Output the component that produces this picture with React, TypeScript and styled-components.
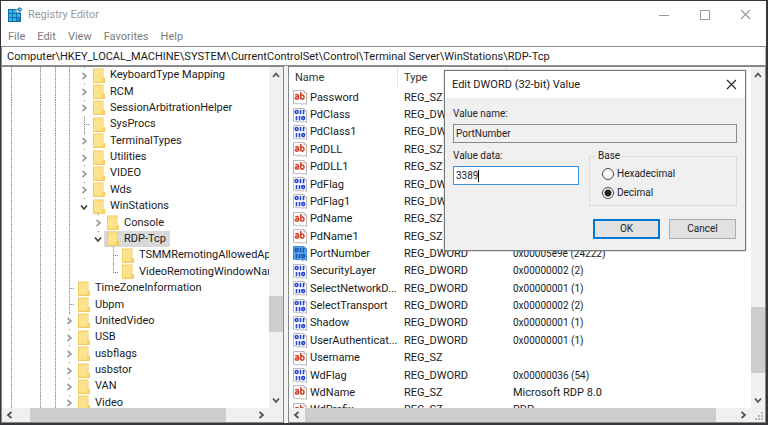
import React from "react";
import styled, { createGlobalStyle, css } from "styled-components";

const UI_FONT = '"Roboto", "Open Sans", sans-serif';

const GlobalStyle = createGlobalStyle`
  * { box-sizing: border-box; }
  html, body, #root { height: 100%; }
  body {
    margin: 0;
    overflow: hidden;
    font-family: ${UI_FONT};
    font-size: 11px;
    line-height: 16px;
    color: #1b1b1b;
  }
  button, input { font: inherit; color: inherit; }
`;

/* ---------- window frame ---------- */

const Window = styled.main`
  position: relative;
  height: 100%;
  display: flex;
  flex-direction: column;
  background: #fff;
  border: solid #37373b;
  border-width: 1px 2px 2px 1px;
`;

const TitleBar = styled.header`
  flex: none;
  height: 27px;
  display: flex;
  align-items: center;
  padding-left: 7px;
`;

const WindowTitle = styled.h1`
  flex: 1;
  margin: 0 0 0 5px;
  font-size: 11px;
  line-height: 16px;
  font-weight: 400;
  color: #9a9a9a;
`;

const CaptionButton = styled.button<{ $dark?: boolean }>`
  flex: none;
  width: 41px;
  height: 26px;
  padding: 0;
  border: 0;
  background: none;
  display: grid;
  place-items: center;
  color: ${(p) => (p.$dark ? "#222" : "#999")};
`;

const MenuBar = styled.nav`
  flex: none;
  height: 18px;
  display: flex;
  gap: 12px;
  padding-left: 7px;
`;

const MenuItem = styled.button`
  padding: 0;
  border: 0;
  background: none;
  line-height: 16px;
  color: #7b7b7b;
`;

const AddressBar = styled.input`
  flex: none;
  width: 100%;
  height: 20px;
  padding: 0 5px;
  border: 1px solid #8c8c8c;
  border-right-color: #b5b5b5;
  background: #fff;
  outline: 0;
`;

const Panes = styled.div`
  flex: 1;
  min-height: 0;
  display: flex;
  gap: 4px;
  background: #f3f3f3;
`;

const Pane = styled.section<{ $basis?: number }>`
  ${(p) => (p.$basis ? css`flex: none; width: ${p.$basis}px;` : css`flex: 1; min-width: 0;`)}
  display: grid;
  grid-template-columns: minmax(0, 1fr) 14px;
  grid-template-rows: minmax(0, 1fr) 14px;
  background: #fff;
  border: 1px solid #83878d;
`;

/* ---------- scroll bars ---------- */

const Track = styled.div<{ $vertical?: boolean }>`
  display: flex;
  flex-direction: ${(p) => (p.$vertical ? "column" : "row")};
  background: #f0f0f0;
`;

const Arrow = styled.button<{ $vertical?: boolean }>`
  flex: none;
  width: ${(p) => (p.$vertical ? "14px" : "16px")};
  height: ${(p) => (p.$vertical ? "16px" : "14px")};
  padding: 0;
  border: 0;
  background: none;
  display: grid;
  place-items: center;
  color: #505050;
`;

const Space = styled.div<{ $grow: number }>`
  flex: ${(p) => p.$grow} 1 0;
`;

const Thumb = styled.div<{ $grow: number }>`
  flex: ${(p) => p.$grow} 1 0;
  background: #cdcdcd;
`;

const Corner = styled.div`
  background: #f0f0f0;
  display: grid;
  place-items: end;
`;

const turns = { up: "M1 6 4 2.5 7 6", down: "M1 2.5 4 6 7 2.5", left: "M5.5 1 2 4 5.5 7", right: "M2.5 1 6 4 2.5 7" };

function Chevron({ to }: { to: keyof typeof turns }) {
  return (
    <svg width="8" height="8" viewBox="0 0 8 8" fill="none" stroke="currentColor" strokeWidth="1.7">
      <path d={turns[to]} />
    </svg>
  );
}

function ScrollBar({ vertical, parts }: { vertical?: boolean; parts: [number, number, number] }) {
  return (
    <Track $vertical={vertical}>
      <Arrow $vertical={vertical} aria-label={vertical ? "Scroll up" : "Scroll left"}>
        <Chevron to={vertical ? "up" : "left"} />
      </Arrow>
      <Space $grow={parts[0]} />
      <Thumb $grow={parts[1]} />
      <Space $grow={parts[2]} />
      <Arrow $vertical={vertical} aria-label={vertical ? "Scroll down" : "Scroll right"}>
        <Chevron to={vertical ? "down" : "right"} />
      </Arrow>
    </Track>
  );
}

/* ---------- key tree ---------- */

const dots = "repeating-linear-gradient(to bottom, #8e8e8e 0 1px, #e4e4e4 1px 2px)";

const TreeViewport = styled.div`
  overflow: hidden;
  display: grid;
`;

const TreeList = styled.ul`
  margin: 0 0 -3px;
  padding: 0 0 0 9px;
  list-style: none;
  display: grid;
  grid-auto-rows: minmax(0, 1fr);
`;

const TreeRow = styled.li`
  display: flex;
  align-items: stretch;
  white-space: nowrap;
`;

const Guide = styled.span<{ $w: number }>`
  flex: none;
  width: ${(p) => p.$w}px;
  background: ${dots} left / 1px 100% no-repeat;
`;

const Branch = styled.span<{ $last?: boolean }>`
  flex: none;
  width: 13px;
  background:
    repeating-linear-gradient(to right, #8e8e8e 0 1px, #e4e4e4 1px 2px) 7px 8px / 5px 1px no-repeat,
    ${dots} 7px 0 / 1px ${(p) => (p.$last ? "9px" : "100%")} no-repeat;
`;

const Toggle = styled.button<{ $open?: boolean }>`
  flex: none;
  width: 13px;
  padding: 1px 0 0;
  border: 0;
  display: grid;
  place-items: center;
  color: ${(p) => (p.$open ? "#404040" : "#a0a0a0")};
  background:
    ${dots} 7px 0 / 1px 2px no-repeat,
    #fff;
`;

const Entry = styled.span<{ $selected?: boolean }>`
  display: flex;
  align-items: center;
  gap: 5px;
  padding: 0 4px 0 3px;
  line-height: 16px;
  background: ${(p) => (p.$selected ? "#d9d9d9" : "transparent")};
`;

function FolderIcon() {
  return (
    <svg width="12" height="15" viewBox="0 0 12 15">
      <path d="M0 .5h10.5v9.5h1.5v5H0z" fill="#f1cb60" />
      <path d="M1 1.5h8.8v8.8l-1 3.4H1z" fill="#ffe28c" />
      <path d="M9 14.5V11l1-1h1.3v4.5z" fill="#fad45e" />
    </svg>
  );
}

type Mark = "closed" | "open" | "leaf" | "last";
type Level = 0 | 1 | 2 | 3;

const guideWidths: Record<Level, number[]> = {
  0: [29, 15, 7],
  1: [29, 15, 14, 8],
  2: [29, 15, 14, 22],
  3: [29, 15, 14, 37],
};

const keys: [Level, Mark, string][] = [
  [1, "closed", "KeyboardType Mapping"],
  [1, "closed", "RCM"],
  [1, "closed", "SessionArbitrationHelper"],
  [1, "leaf", "SysProcs"],
  [1, "closed", "TerminalTypes"],
  [1, "closed", "Utilities"],
  [1, "closed", "VIDEO"],
  [1, "closed", "Wds"],
  [1, "open", "WinStations"],
  [2, "closed", "Console"],
  [2, "open", "RDP-Tcp"],
  [3, "leaf", "TSMMRemotingAllowedApps"],
  [3, "last", "VideoRemotingWindowNames"],
  [0, "leaf", "TimeZoneInformation"],
  [0, "leaf", "Ubpm"],
  [0, "closed", "UnitedVideo"],
  [0, "closed", "USB"],
  [0, "closed", "usbflags"],
  [0, "closed", "usbstor"],
  [0, "closed", "VAN"],
  [0, "closed", "Video"],
];

function KeyTree() {
  return (
    <TreeViewport>
      <TreeList>
        {keys.map(([level, mark, name]) => (
          <TreeRow key={name}>
            {guideWidths[level].map((w, i) => (
              <Guide key={i} $w={w} />
            ))}
            {mark === "leaf" || mark === "last" ? (
              <Branch $last={mark === "last"} />
            ) : (
              <Toggle $open={mark === "open"} aria-label={`Toggle ${name}`}>
                <Chevron to={mark === "open" ? "down" : "right"} />
              </Toggle>
            )}
            <Entry $selected={name === "RDP-Tcp"}>
              <FolderIcon />
              {name}
            </Entry>
          </TreeRow>
        ))}
      </TreeList>
    </TreeViewport>
  );
}

/* ---------- value list ---------- */

const ListViewport = styled.div`
  overflow: hidden;
  display: grid;
`;

const ValueTable = styled.table`
  margin-bottom: -11px;
  display: grid;
  grid-template-rows: 22px minmax(0, 1fr);

  thead, tbody { display: grid; grid-auto-rows: minmax(0, 1fr); }
  tr {
    display: grid;
    grid-template-columns: 109px 109px minmax(0, 1fr);
    align-items: center;
  }
`;

const HeadCell = styled.th`
  height: 22px;
  padding: 3px 6px 0;
  text-align: left;
  font-weight: 400;
  color: #333;
  border-right: 1px solid #e5e5e5;
  &:last-child { border-right: 0; }
`;

const Cell = styled.td<{ $numeric?: boolean }>`
  padding: 0 0 0 6px;
  white-space: nowrap;
  overflow: hidden;
  font-size: ${(p) => (p.$numeric ? "10px" : "11px")};
`;

const NameCell = styled(Cell)`
  display: flex;
  align-items: center;
  gap: 3px;
  padding-left: 4px;
  svg { flex: none; }
`;

function ValueIcon({ kind, selected }: { kind: string; selected?: boolean }) {
  return (
    <svg width="14" height="15" viewBox="0 0 14 15" fill="none">
      <path
        d="M.5.5h10.5l2.5 2.5v11.5l-2-1-2.5.8-2-1.3-2.5 1-2-.9-2 .4z"
        fill={selected ? "#5aa5ea" : "#fff"}
        stroke={selected ? "#3f8bd6" : "#b9b9b9"}
      />
      <path d="M11 .5V3h2.5" stroke={selected ? "#3f8bd6" : "#b9b9b9"} />
      {kind === "REG_SZ" ? (
        <g stroke="#d6452b" strokeWidth="1.6">
          <path d="M2.3 5c1.8-.8 3.3-.4 3.3 1v3.3M5.6 6.8c-2-.2-3.2.2-3.2 1.3 0 1.5 2.4 1.4 3.2.1" />
          <path d="M7.8 2.1v7.2M7.8 5.9c.7-1.3 3.2-1.4 3.2 1.2s-2.5 2.5-3.2 1.1" />
        </g>
      ) : (
        <g stroke={selected ? "#1259b5" : "#2445d8"} strokeWidth="1.6">
          <ellipse cx="3.6" cy="4" rx="1.4" ry="1.5" />
          <path d="M7.5 2v4.2M10.5 2v4.2M3.5 8v4.3M6.5 8v4.3" />
          <ellipse cx="10.2" cy="10.1" rx="1.4" ry="1.5" />
        </g>
      )}
    </svg>
  );
}

const values: [string, string, string][] = [
  ["Password", "REG_SZ", ""],
  ["PdClass", "REG_DWORD", ""],
  ["PdClass1", "REG_DWORD", ""],
  ["PdDLL", "REG_SZ", ""],
  ["PdDLL1", "REG_SZ", ""],
  ["PdFlag", "REG_DWORD", ""],
  ["PdFlag1", "REG_DWORD", ""],
  ["PdName", "REG_SZ", ""],
  ["PdName1", "REG_SZ", ""],
  ["PortNumber", "REG_DWORD", "0x00005e9e (24222)"],
  ["SecurityLayer", "REG_DWORD", "0x00000002 (2)"],
  ["SelectNetworkD...", "REG_DWORD", "0x00000001 (1)"],
  ["SelectTransport", "REG_DWORD", "0x00000002 (2)"],
  ["Shadow", "REG_DWORD", "0x00000001 (1)"],
  ["UserAuthenticat...", "REG_DWORD", "0x00000001 (1)"],
  ["Username", "REG_SZ", ""],
  ["WdFlag", "REG_DWORD", "0x00000036 (54)"],
  ["WdName", "REG_SZ", "Microsoft RDP 8.0"],
  ["WdPrefix", "REG_SZ", "RDP"],
];

function ValueList() {
  return (
    <ListViewport>
      <ValueTable>
        <thead>
          <tr>
            <HeadCell scope="col">Name</HeadCell>
            <HeadCell scope="col">Type</HeadCell>
            <HeadCell scope="col" aria-label="Data" />
          </tr>
        </thead>
        <tbody>
          {values.map(([name, type, data]) => (
            <tr key={name}>
              <NameCell>
                <ValueIcon kind={type} selected={name === "PortNumber"} />
                {name}
              </NameCell>
              <Cell>{type}</Cell>
              <Cell $numeric={type === "REG_DWORD"}>{data}</Cell>
            </tr>
          ))}
        </tbody>
      </ValueTable>
    </ListViewport>
  );
}

/* ---------- edit dialog (floats above the panes) ---------- */

const Dialog = styled.form`
  position: absolute;
  top: 69px;
  right: 20px;
  width: 302px;
  background: #f0f0f0;
  border: 1px solid #777;
  box-shadow: 0 0 2px rgba(0, 0, 0, 0.3);
  font-size: 10px;
  color: #222;
`;

const DialogHeader = styled.div`
  height: 27px;
  display: flex;
  align-items: center;
  background: #fff;
  padding-left: 7px;
`;

const DialogTitle = styled.h2`
  flex: 1;
  margin: 0;
  font-size: 11px;
  font-weight: 400;
`;

const DialogClose = styled(CaptionButton)`
  width: 28px;
`;

const DialogBody = styled.div`
  padding: 8px 8px 11px;
  display: flex;
  flex-direction: column;
`;

const Label = styled.label`
  line-height: 16px;
  margin-bottom: 2px;
`;

const ReadOnlyField = styled.input`
  height: 19px;
  width: 100%;
  padding: 0 2px;
  border: 1px solid #8a8a8a;
  background: #f0f0f0;
  outline: 0;
`;

const Columns = styled.div`
  display: flex;
  gap: 10px;
  margin-top: 5px;
`;

const DataColumn = styled.div`
  flex: none;
  width: 126px;
  display: flex;
  flex-direction: column;
`;

const DataField = styled.span`
  height: 19px;
  display: flex;
  align-items: center;
  padding: 0 2px;
  border: 1px solid #3a92dd;
  background: #fff;
`;

const DataInput = styled.input`
  field-sizing: content;
  padding: 0;
  border: 0;
  outline: 0;
  background: none;
`;

const Caret = styled.span`
  width: 1px;
  height: 12px;
  background: #000;
`;

const BaseGroup = styled.fieldset`
  flex: 1;
  min-width: 0;
  margin: 0;
  padding: 2px 12px 4px;
  border: 1px solid #dcdcdc;
  display: flex;
  flex-direction: column;
  gap: 3px;
`;

const Legend = styled.legend`
  margin-left: -6px;
  padding: 0 2px;
  line-height: 16px;
`;

const RadioLabel = styled.label`
  display: flex;
  align-items: center;
  gap: 3px;
  line-height: 16px;
`;

const Radio = styled.input`
  appearance: none;
  width: 12px;
  height: 12px;
  margin: 0;
  border: 1px solid #444;
  border-radius: 50%;
  background: #fff;
  &:checked { background: radial-gradient(circle, #222 0 3px, #fff 4px); }
`;

const Actions = styled.div`
  display: flex;
  justify-content: flex-end;
  gap: 9px;
  margin-top: 13px;
  padding-right: 1px;
`;

const ActionButton = styled.button<{ $primary?: boolean }>`
  width: 67px;
  height: 20px;
  padding: 0;
  line-height: 16px;
  background: #e1e1e1;
  border: ${(p) => (p.$primary ? "2px solid #0078d7" : "1px solid #adadad")};
`;

function CloseGlyph() {
  return (
    <svg width="11" height="11" viewBox="0 0 11 11" fill="none" stroke="currentColor" strokeWidth="1.1">
      <path d="M1 1l9 9M10 1l-9 9" />
    </svg>
  );
}

function EditDialog() {
  return (
    <Dialog role="dialog" aria-labelledby="dialog-title" onSubmit={(e) => e.preventDefault()}>
      <DialogHeader>
        <DialogTitle id="dialog-title">Edit DWORD (32-bit) Value</DialogTitle>
        <DialogClose type="button" $dark aria-label="Close dialog">
          <CloseGlyph />
        </DialogClose>
      </DialogHeader>
      <DialogBody>
        <Label htmlFor="value-name">Value name:</Label>
        <ReadOnlyField id="value-name" readOnly value="PortNumber" />
        <Columns>
          <DataColumn>
            <Label htmlFor="value-data">Value data:</Label>
            <DataField>
              <DataInput id="value-data" defaultValue="3389" />
              <Caret />
            </DataField>
          </DataColumn>
          <BaseGroup>
            <Legend>Base</Legend>
            <RadioLabel>
              <Radio type="radio" name="base" />
              Hexadecimal
            </RadioLabel>
            <RadioLabel>
              <Radio type="radio" name="base" defaultChecked />
              Decimal
            </RadioLabel>
          </BaseGroup>
        </Columns>
        <Actions>
          <ActionButton type="submit" $primary>OK</ActionButton>
          <ActionButton type="button">Cancel</ActionButton>
        </Actions>
      </DialogBody>
    </Dialog>
  );
}

function AppIcon() {
  return (
    <svg width="15" height="15" viewBox="0 0 15 15">
      <path d="M0 2h8.5v3.5H13V15H0z" fill="#0f6fa8" />
      <g fill="#35b4ea">
        <path d="M1 3h3v3H1zM5 3h3v3H5zM1 7h3v3H1zM5 7h3v3H5zM9 7h3v3H9zM1 11h3v3H1zM5 11h3v3H5z" />
      </g>
      <path d="M9 11h3v3H9z" fill="#1c8cc7" />
      <path d="M11.5 0l3 2.6-3 2.6-2.8-2.6z" fill="#1b87bf" />
      <path d="M11.5 1.4l1.4 1.2-1.4 1.2-1.3-1.2z" fill="#63cdf5" />
    </svg>
  );
}

function GripIcon() {
  return (
    <svg width="12" height="12" viewBox="0 0 12 12" fill="#b4b4b4">
      <path d="M8 2h2v2H8zM5 5h2v2H5zM8 5h2v2H8zM2 8h2v2H2zM5 8h2v2H5zM8 8h2v2H8z" />
    </svg>
  );
}

export default function App() {
  return (
    <>
      <GlobalStyle />
      <Window>
        <TitleBar>
          <AppIcon />
          <WindowTitle>Registry Editor</WindowTitle>
          <CaptionButton aria-label="Minimize">
            <svg width="10" height="10" viewBox="0 0 10 10" stroke="currentColor">
              <path d="M0 5.5h10" />
            </svg>
          </CaptionButton>
          <CaptionButton aria-label="Maximize">
            <svg width="10" height="10" viewBox="0 0 10 10" fill="none" stroke="currentColor">
              <path d="M.5.5h9v9h-9z" />
            </svg>
          </CaptionButton>
          <CaptionButton aria-label="Close">
            <CloseGlyph />
          </CaptionButton>
        </TitleBar>
        <MenuBar>
          {["File", "Edit", "View", "Favorites", "Help"].map((item) => (
            <MenuItem key={item}>{item}</MenuItem>
          ))}
        </MenuBar>
        <AddressBar
          aria-label="Key path"
          defaultValue={"Computer\\HKEY_LOCAL_MACHINE\\SYSTEM\\CurrentControlSet\\Control\\Terminal Server\\WinStations\\RDP-Tcp"}
        />
        <Panes>
          <Pane $basis={283}>
            <KeyTree />
            <ScrollBar vertical parts={[212, 36, 60]} />
            <ScrollBar parts={[12, 195, 27]} />
            <Corner />
          </Pane>
          <Pane>
            <ValueList />
            <ScrollBar vertical parts={[223, 66, 19]} />
            <ScrollBar parts={[0, 411, 19]} />
            <Corner>
              <GripIcon />
            </Corner>
          </Pane>
        </Panes>
        <EditDialog />
      </Window>
    </>
  );
}
